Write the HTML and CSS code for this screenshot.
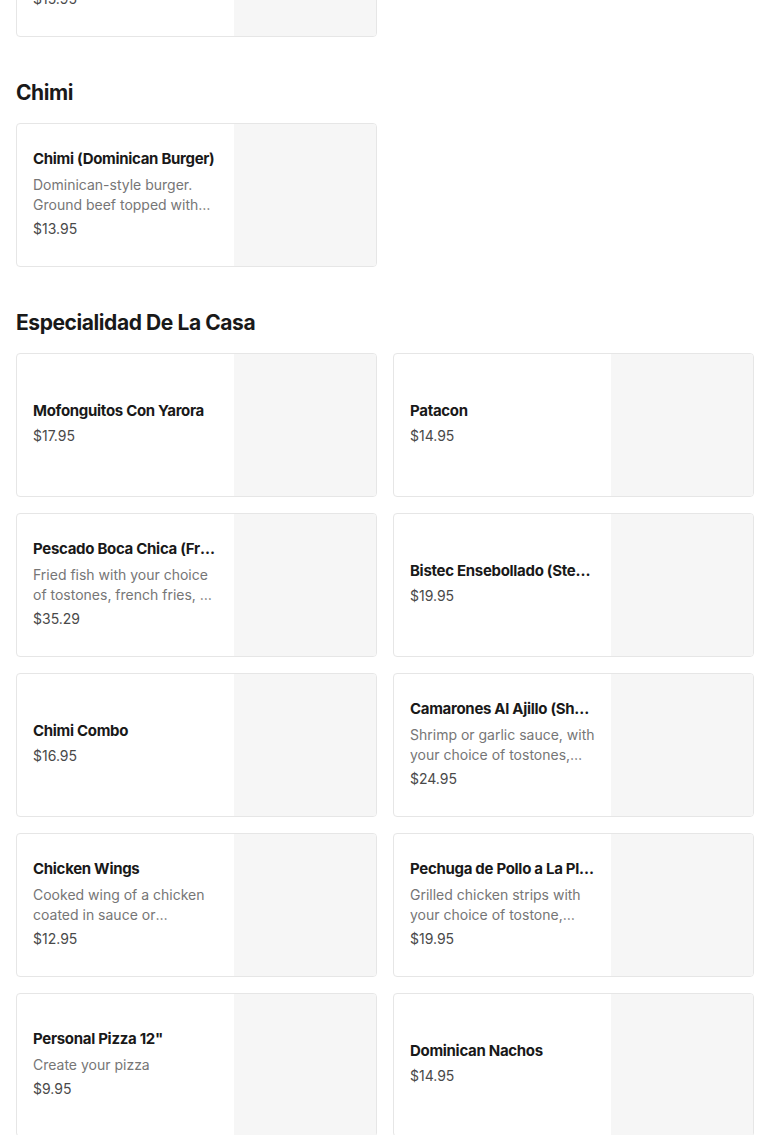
FILE: index.html
```html
<!DOCTYPE html>
<html lang="en">
<head>
<meta charset="utf-8">
<title>Menu</title>
<link rel="stylesheet" href="styles.css">
</head>
<body>
<main class="menu">
  <section class="section section-first">
    <div class="grid">
      <article class="card">
        <div class="info">
          <h3 class="title">Chimi Especial</h3>
          <p class="desc">Dominican-style burger with ham, cheese and fried egg.</p>
          <p class="price">$15.95</p>
        </div>
        <div class="thumb"></div>
      </article>
    </div>
  </section>

  <section class="section">
    <h2 class="heading">Chimi</h2>
    <div class="grid">
      <article class="card">
        <div class="info">
          <h3 class="title">Chimi (Dominican Burger)</h3>
          <p class="desc">Dominican-style burger. Ground beef topped with cabbage, onions, tomatoes and special sauce.</p>
          <p class="price">$13.95</p>
        </div>
        <div class="thumb"></div>
      </article>
    </div>
  </section>

  <section class="section">
    <h2 class="heading">Especialidad De La Casa</h2>
    <div class="grid">
      <article class="card">
        <div class="info">
          <h3 class="title">Mofonguitos Con Yarora</h3>
          <p class="price">$17.95</p>
        </div>
        <div class="thumb"></div>
      </article>
      <article class="card">
        <div class="info">
          <h3 class="title">Patacon</h3>
          <p class="price">$14.95</p>
        </div>
        <div class="thumb"></div>
      </article>
      <article class="card">
        <div class="info">
          <h3 class="title">Pescado Boca Chica (Fried Fish)</h3>
          <p class="desc">Fried fish with your choice of tostones, french fries, or rice and salad.</p>
          <p class="price">$35.29</p>
        </div>
        <div class="thumb"></div>
      </article>
      <article class="card">
        <div class="info">
          <h3 class="title">Bistec Ensebollado (Steak and Onions)</h3>
          <p class="price">$19.95</p>
        </div>
        <div class="thumb"></div>
      </article>
      <article class="card">
        <div class="info">
          <h3 class="title">Chimi Combo</h3>
          <p class="price">$16.95</p>
        </div>
        <div class="thumb"></div>
      </article>
      <article class="card">
        <div class="info">
          <h3 class="title">Camarones Al Ajillo (Shrimp in Garlic Sauce)</h3>
          <p class="desc">Shrimp or garlic sauce, with your choice of tostones, french fries or rice.</p>
          <p class="price">$24.95</p>
        </div>
        <div class="thumb"></div>
      </article>
      <article class="card">
        <div class="info">
          <h3 class="title">Chicken Wings</h3>
          <p class="desc">Cooked wing of a chicken coated in sauce or seasoning.</p>
          <p class="price">$12.95</p>
        </div>
        <div class="thumb"></div>
      </article>
      <article class="card">
        <div class="info">
          <h3 class="title">Pechuga de Pollo a La Plancha</h3>
          <p class="desc">Grilled chicken strips with your choice of tostone, french fries or rice.</p>
          <p class="price">$19.95</p>
        </div>
        <div class="thumb"></div>
      </article>
      <article class="card">
        <div class="info">
          <h3 class="title">Personal Pizza 12"</h3>
          <p class="desc">Create your pizza</p>
          <p class="price">$9.95</p>
        </div>
        <div class="thumb"></div>
      </article>
      <article class="card">
        <div class="info">
          <h3 class="title">Dominican Nachos</h3>
          <p class="price">$14.95</p>
        </div>
        <div class="thumb"></div>
      </article>
    </div>
  </section>
</main>
</body>
</html>
```

FILE: styles.css
```css
* { box-sizing: border-box; }

html, body {
  margin: 0;
  padding: 0;
  background: #ffffff;
}

body {
  font-family: Inter, "Noto Sans", "Liberation Sans", sans-serif;
  color: #191919;
  overflow: hidden;
}

.menu {
  padding: 0 16px;
  margin-top: -107px;
}

.section {
  padding-bottom: 41px;
}

.heading {
  margin: 0 0 15px;
  font-size: 21px;
  line-height: 30px;
  font-weight: 700;
  letter-spacing: -0.02em;
  color: #191919;
}

.grid {
  display: grid;
  grid-template-columns: 1fr 1fr;
  gap: 16px;
}

.card {
  display: flex;
  height: 144px;
  border: 1px solid #e6e6e6;
  border-radius: 4px;
  overflow: hidden;
  background: #fff;
}

.info {
  flex: 1;
  min-width: 0;
  display: flex;
  flex-direction: column;
  justify-content: center;
  padding: 0 16px 2px;
}

.title {
  margin: 0;
  font-size: 15px;
  line-height: 22px;
  font-weight: 700;
  letter-spacing: -0.02em;
  color: #191919;
  white-space: nowrap;
  overflow: hidden;
  text-overflow: ellipsis;
}

.desc {
  margin: 5px 0 0;
  font-size: 14px;
  line-height: 20px;
  color: #767676;
  display: -webkit-box;
  -webkit-line-clamp: 2;
  -webkit-box-orient: vertical;
  overflow: hidden;
}

.price {
  margin: 2px 0 0;
  font-size: 14px;
  line-height: 24px;
  color: #494949;
}

.thumb {
  flex: 0 0 142px;
  background: #f6f6f6;
}
```
